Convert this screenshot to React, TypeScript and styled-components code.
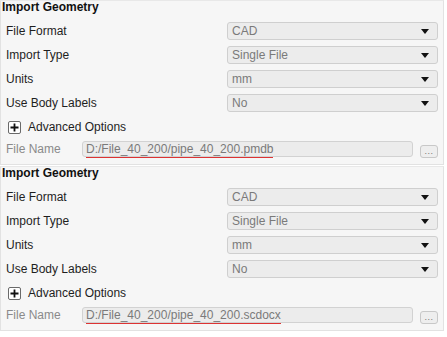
import React from "react";
import styled, { createGlobalStyle } from "styled-components";

const Global = createGlobalStyle`
  body {
    margin: 0;
    background: #ffffff;
    font-family: "Liberation Sans", Arial, sans-serif;
  }
`;

const Page = styled.div`
  width: 447px;
  display: flex;
  flex-direction: column;
  gap: 1px;
`;

const Panel = styled.div`
  height: 165px;
  box-sizing: border-box;
  border: 1px solid #e2e2e2;
  border-top-color: #e8e8e8;
  margin-right: 3px;
  background: #f6f6f6;
  display: flex;
  flex-direction: column;
`;

const Title = styled.div`
  height: 14px;
  line-height: 12px;
  padding-left: 1px;
  font-size: 12px;
  font-weight: bold;
  color: #111;
  margin-bottom: 4px;
`;

const Row = styled.div`
  height: 24px;
  display: flex;
  align-items: center;
`;

const Label = styled.div`
  width: 220px;
  box-sizing: border-box;
  padding-left: 5px;
  font-size: 12px;
  color: #1e1e1e;
`;

const Select = styled.div`
  width: 211px;
  height: 18px;
  box-sizing: border-box;
  margin-left: 6px;
  border: 1px solid #cfcfcf;
  border-radius: 3px;
  background: #ececec;
  display: flex;
  align-items: center;
  justify-content: space-between;
  padding: 0 8px 0 4px;
  font-size: 12px;
  color: #7a7a7a;
`;

const Arrow = styled.span`
  width: 0;
  height: 0;
  border-left: 4px solid transparent;
  border-right: 4px solid transparent;
  border-top: 5px solid #111;
`;

const PlusBox = styled.span`
  width: 13px;
  height: 13px;
  margin: 0 7px 0 7px;
  box-sizing: border-box;
  border: 1px solid #6a6a6a;
  border-radius: 2px;
  background: #fff;
  display: flex;
  align-items: center;
  justify-content: center;
`;

const AdvText = styled.span`
  font-size: 12px;
  color: #1e1e1e;
`;

const FileRow = styled.div`
  height: 20px;
  display: flex;
  align-items: center;
`;

const FileLabel = styled.div`
  width: 76px;
  padding-left: 5px;
  font-size: 12px;
  color: #8a8a8a;
`;

const FileBox = styled.div`
  width: 331px;
  height: 16px;
  box-sizing: border-box;
  border: 1px solid #d2d2d2;
  border-radius: 3px;
  background: #ececec;
  display: flex;
  align-items: center;
  padding-left: 3px;
  font-size: 12px;
  color: #7a7a7a;
`;

const Path = styled.span`
  line-height: 13px;
  padding-bottom: 1px;
  margin-top: 3px;
  border-bottom: 1px solid #d33;
`;

const Dots = styled.div`
  width: 18px;
  height: 13px;
  margin: 4px 0 0 7px;
  box-sizing: border-box;
  border: 1px solid #c8c8c8;
  border-radius: 3px;
  background: #eeeeee;
  font-size: 9px;
  line-height: 10px;
  text-align: center;
  color: #777;
  letter-spacing: 0.5px;
`;

type Field = { label: string; value: string };

const fields: Field[] = [
  { label: "File Format", value: "CAD" },
  { label: "Import Type", value: "Single File" },
  { label: "Units", value: "mm" },
  { label: "Use Body Labels", value: "No" },
];

const ImportPanel = ({ file }: { file: string }) => (
  <Panel>
    <Title>Import Geometry</Title>
    {fields.map((f) => (
      <Row key={f.label}>
        <Label>{f.label}</Label>
        <Select>
          {f.value}
          <Arrow />
        </Select>
      </Row>
    ))}
    <Row>
      <PlusBox>
        <svg width="9" height="9" viewBox="0 0 9 9">
          <path d="M4.5 0.5V8.5M0.5 4.5H8.5" stroke="#111" strokeWidth="1.8" />
        </svg>
      </PlusBox>
      <AdvText>Advanced Options</AdvText>
    </Row>
    <FileRow>
      <FileLabel>File Name</FileLabel>
      <FileBox>
        <Path>{file}</Path>
      </FileBox>
      <Dots>...</Dots>
    </FileRow>
  </Panel>
);

export default function App() {
  return (
    <Page>
      <Global />
      <ImportPanel file="D:/File_40_200/pipe_40_200.pmdb" />
      <ImportPanel file="D:/File_40_200/pipe_40_200.scdocx" />
    </Page>
  );
}
